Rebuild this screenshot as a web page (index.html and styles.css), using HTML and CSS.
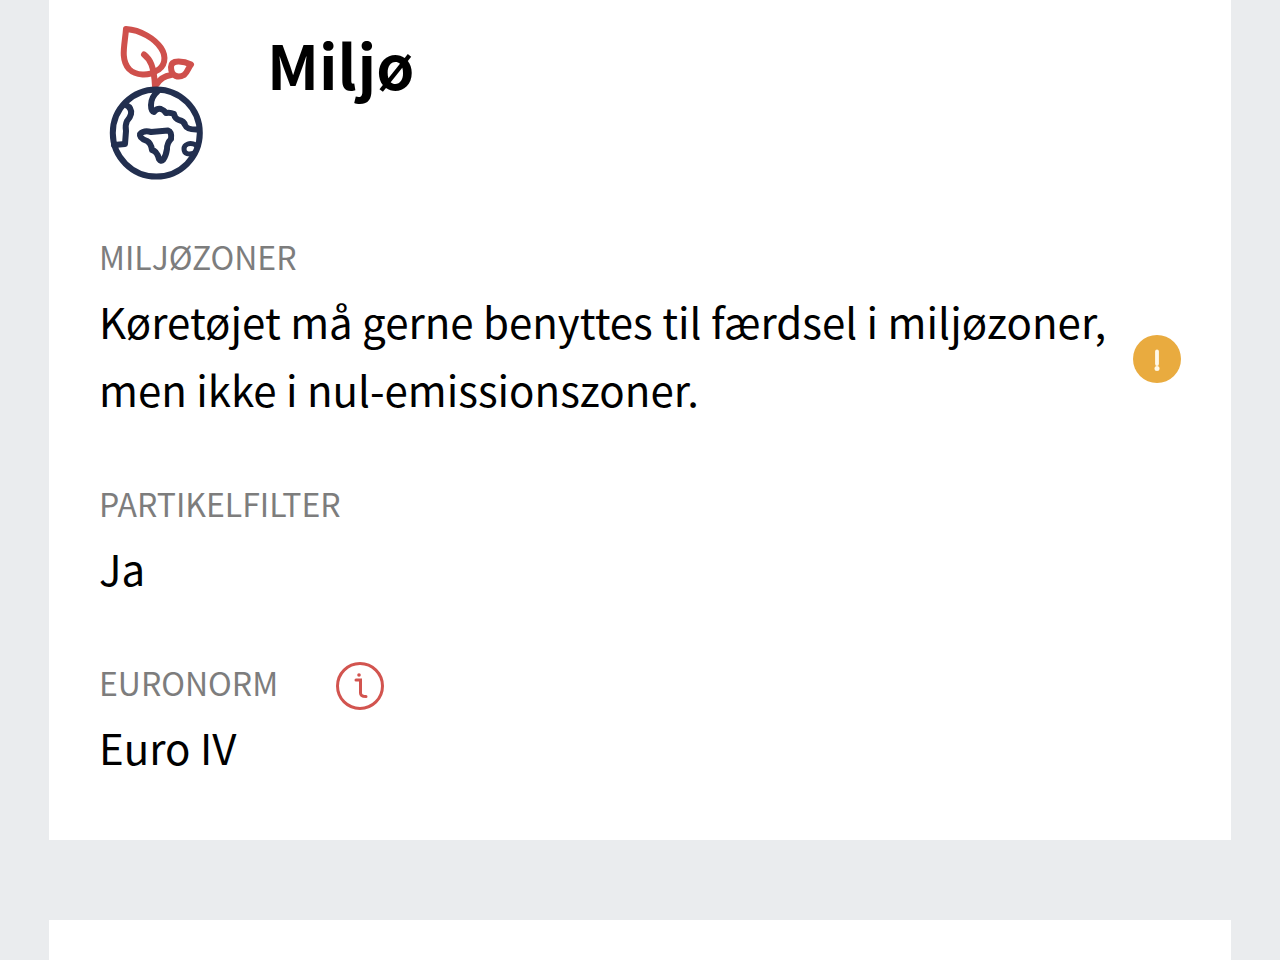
FILE: index.html
```html
<!DOCTYPE html>
<html lang="da">
<head>
<meta charset="utf-8">
<meta name="viewport" content="width=device-width, initial-scale=1">
<title>Miljø</title>
<link rel="stylesheet" href="styles.css">
</head>
<body>
<main class="page">
  <section class="card">
    <header class="card-header">
      <svg class="card-icon" viewBox="99 22 116 160" fill="none" stroke-linecap="round" stroke-linejoin="round" aria-hidden="true">
        <g class="plant">
          <path d="M126 29C141 30 155 39 161 48C167 57 165 67 156 71C149 76 136 76 129 69C120 59 125 44 126 29Z"/>
          <path d="M144 54.500C150 59 154 66 155 86"/>
          <path d="M157 84C160 79 165 76 171 75"/>
          <path d="M191 64.500C184 61 171 59 171 67C171 77 179 78 184 75C188 72 188 68 191 64.500Z"/>
        </g>
        <g class="globe">
          <circle cx="156.300" cy="133" r="43.500"/>
          <path d="M126 105Q132 108 131 114Q130 118 127 121Q125 125 126 131L125 144L114 145"/>
          <path d="M158 91Q151 97 151 105Q151 111 154 112Q157 108 161 109Q164 110 166 113Q170 112 174 114Q175 119 179 120Q184 121 185 125Q187 130 198 129.500"/>
          <path d="M140 134Q144 130 151 132L168 130.500Q172 132 171 139Q167 143 167 149Q166 156 163 160Q161 162 159 159Q157 151 152 150Q151 143 147 141Q139 138 140 134Z"/>
          <path class="island" d="M196 145C190 142 184 144 184 149C184 154 189 155 194 153"/>
        </g>
      </svg>
      <h1 class="card-title">Miljø</h1>
    </header>
    <dl class="facts">
      <div class="fact">
        <dt class="fact-label">MILJØZONER</dt>
        <dd class="fact-value">
          <span class="fact-text">Køretøjet må gerne benyttes til færdsel i miljøzoner, men ikke i nul-emissionszoner.</span>
          <svg class="warning" viewBox="0 0 48 48" role="img" aria-label="Advarsel">
            <circle cx="24" cy="24" r="24" fill="#e9ab3f"/>
            <path d="M24 16.500V29" stroke="#fff9e8" stroke-width="3.800" stroke-linecap="round"/>
            <circle cx="24" cy="33.500" r="2.500" fill="#fff9e8"/>
          </svg>
        </dd>
      </div>
      <div class="fact">
        <dt class="fact-label">PARTIKELFILTER</dt>
        <dd class="fact-value">Ja</dd>
      </div>
      <div class="fact">
        <dt class="fact-label">EURONORM
          <button class="info" type="button" aria-label="Information om Euronorm">
            <svg class="info-icon" viewBox="0 0 48 48" fill="none" stroke="#d2544f" stroke-width="3" stroke-linecap="round" aria-hidden="true">
              <circle cx="24" cy="24" r="22.500"/>
              <path d="M20 18H24.500V31Q24.500 34.500 30 34.500"/>
              <circle cx="23" cy="13" r="1.800" fill="#d2544f" stroke="none"/>
            </svg>
          </button>
        </dt>
        <dd class="fact-value">Euro IV</dd>
      </div>
    </dl>
  </section>
  <section class="card card-next"></section>
</main>
</body>
</html>
```
FILE: styles.css
```css
* {
  box-sizing: border-box;
}

body {
  margin: 0;
  background: #eaecee;
  color: #000;
  font-family: "Noto Sans CJK SC", "Noto Sans", sans-serif;
}

.page {
  display: flex;
  flex-direction: column;
  gap: 80px;
  min-height: 100vh;
  padding: 0 49px;
}

.card {
  padding: 22px 50px 59px;
  background: #fff;
}

.card-next {
  flex: 1;
  padding: 0;
}

.card-header {
  display: flex;
  align-items: flex-start;
  gap: 52px;
  margin-bottom: 50px;
}

.card-icon {
  width: 116px;
  height: 160px;
}

.plant {
  stroke: #cf504c;
  stroke-width: 6px;
}

.globe {
  stroke: #222f4f;
  stroke-width: 6px;
}

.island {
  stroke-width: 5px;
}

.card-title {
  margin: 0;
  font-size: 61px;
  font-weight: 700;
  line-height: 84px;
}

.facts {
  display: flex;
  flex-direction: column;
  gap: 56px;
  margin: 0;
}

.fact {
  display: flex;
  flex-direction: column;
  gap: 7px;
}

.fact-label {
  display: flex;
  align-items: center;
  gap: 58px;
  color: #7d7d7d;
  font-size: 32px;
  line-height: 48px;
}

.fact-value {
  display: flex;
  align-items: center;
  gap: 16px;
  margin: 0;
  font-size: 42px;
  line-height: 68px;
}

.fact-text {
  flex: 1;
}

.warning {
  flex: none;
  width: 48px;
  height: 48px;
  margin-top: 8px;
}

.info {
  width: 48px;
  height: 48px;
  margin: 4px 0 -4px;
  padding: 0;
  border: 0;
  background: none;
  cursor: pointer;
}

.info-icon {
  display: block;
  width: 48px;
  height: 48px;
}
```
